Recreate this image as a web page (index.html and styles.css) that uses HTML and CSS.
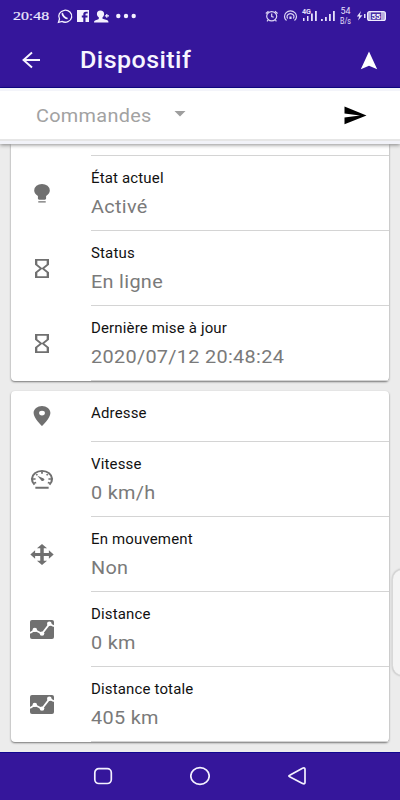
FILE: index.html
```html
<!DOCTYPE html>
<html lang="fr">
<head>
<meta charset="utf-8">
<title>Dispositif</title>
<link rel="stylesheet" href="styles.css">
</head>
<body>
<svg class="defs" width="0" height="0">
  <symbol id="hourglass" viewBox="0 0 24 24" preserveAspectRatio="none"><path d="M6 2v6h.01L6 8.010 10 12l-4 4 .01.010H6V22h12v-5.990h-.01L18 16l-4-4 4-3.990-.01-.010H18V2H6zm10 14.500V20H8v-3.500l4-4 4 4zm-4-5l-4-4V4h8v3.500l-4 4z"/></symbol>
  <symbol id="bulb" viewBox="0 0 24 24" preserveAspectRatio="none"><path d="M8.800 20h6.400v1.300H8.800zM12 2a6.700 6.900 0 0 0-6.700 6.900c0 2.300 1.200 4.300 3.200 5.700v2.600c0 .8.400 1.200 1.100 1.200h4.800c.7 0 1.100-.4 1.100-1.200v-2.600c2-1.400 3.200-3.400 3.200-5.700A6.700 6.900 0 0 0 12 2z"/></symbol>
  <symbol id="place" viewBox="0 0 24 24" preserveAspectRatio="none"><path d="M12 1C8.130 1 4.800 4.130 4.800 8.300c0 5.400 7.200 13.700 7.200 13.700s7.200-8.300 7.200-13.700C19.200 4.130 15.870 1 12 1zm0 9.900a2.500 2.500 0 0 1 0-5 2.500 2.500 0 0 1 0 5z"/></symbol>
  <symbol id="gauge" viewBox="0 0 24 24" preserveAspectRatio="none"><path d="M5.600 17.300A8.600 8.600 0 1 1 18.400 17.300" fill="none" stroke="currentColor" stroke-width="1.800"/><path d="M4.300 11.500h2.200M17.500 11.500h2.200M12 3.500V6M7 6.500l1.100 1M17 6.500l-1.100 1M5.400 15.700l1.600-.6M18.600 15.700l-1.600-.6" stroke="currentColor" stroke-width="1.500"/><path d="M8 8.200l5 2.400a1.500 1.500 0 1 1-1.900 1.800zM6.300 19.600h11.400v2H6.300z"/></symbol>
  <symbol id="move" viewBox="0 0 24 24" preserveAspectRatio="none"><path d="M12 1l4.300 4.600h-2.800v4.900h4.400V7.600L22 12l-4.100 4.400v-2.900h-4.400v4.900h2.800L12 23l-4.300-4.600h2.800v-4.900H6.100v2.900L2 12l4.100-4.400v2.900h4.400V5.600H7.700z"/></symbol>
  <symbol id="chart" viewBox="0 0 24 20" preserveAspectRatio="none"><rect width="24" height="20" rx="2"/><path d="M0 13.800l4.800-3.200 7.200 3.800 7.500-10.200 4.500 2.300" fill="none" stroke="#fff" stroke-width="1.900"/><g fill="#fff"><circle cx="4.800" cy="10.400" r="2.300"/><circle cx="12" cy="14.300" r="2.300"/><circle cx="19.300" cy="4" r="2.300"/></g></symbol>
</svg>
<div class="screen">
  <header>
    <div class="status">
      <span class="clock">20:48</span>
      <svg class="left-icons" width="80" height="16" viewBox="0 0 80 16">
        <g fill="none" stroke="#f4f1ff">
          <path d="M1.500 14.300l1-3.300A6.500 6 0 1 1 5 13.400z" stroke-width="1.300"/>
          <path d="M5.800 5.200c-1.300 1.500 2.800 5.800 4.700 5" stroke-width="1.800"/>
        </g>
        <path fill="#f4f1ff" d="M20 2h12v12h-3.500V9.500h2V7.600h-2V6.500c0-.8.300-1 1-1h1.200V3.700h-1.800c-1.900 0-2.600 1-2.600 2.500v1.400h-1.500v1.900h1.500V14H20z"/>
        <path fill="#f4f1ff" d="M43.300 2.500c2.500 0 3.800 1.500 3.800 3.400 0 1.600-.7 2.700-1.600 3.400v1.400l4.200 1.400c1 .4 1.800.9 1.800 2.300H37c0-1.400.7-1.900 1.700-2.200l2.700-1 .4-.5V9.300c-1-.7-1.900-1.800-1.900-3.400 0-1.900 1.200-3.400 3.400-3.400zM49.200 6h1.200v1.300H52v1.200h-1.600v1.300h-1.200V8.500h-1.300V7.300h1.300z"/>
        <g fill="#f4f1ff"><circle cx="61.300" cy="8" r="2.200"/><circle cx="69" cy="8" r="2.200"/><circle cx="76.700" cy="8" r="2.200"/></g>
      </svg>
      <span class="spacer"></span>
      <svg class="right-icons" width="122" height="20" viewBox="0 0 122 20">
        <g fill="none" stroke="#dcd6f4" stroke-width="1.200">
          <ellipse cx="6.700" cy="10.300" rx="5" ry="4.600"/><path d="M6.700 7.500v3l2 .8M.8 7.500l2.700-2.300M12.600 7.500L9.900 5.200M3 14l-1 1.400M10.400 14l1 1.400"/>
          <path d="M21.500 14.500A6 5.500 0 1 1 29.500 14.500M22.700 12.500A3.500 3 0 1 1 28.300 12.500"/>
          <path d="M25.500 10.500v2.500" stroke-width="2.200"/>
        </g>
        <path fill="#e6e1fa" d="M38 12h1.500v3H38zM42 10h1.500v5H42zM46 7.500h1.800V15H46zM50 5h1.800v10H50zM56 13h1.800v2H56zM60 11h1.800v4H60zM64 8h1.800v7H64zM68 5h1.800v10H68zM96 5l-4.200 5.500h2.400L93 14.500l4.500-5.300h-2.700z"/>
        <text x="37" y="8" class="tiny bold" textLength="9" lengthAdjust="spacingAndGlyphs">4G</text>
        <text x="75.500" y="7.800" class="tiny" textLength="10" lengthAdjust="spacingAndGlyphs">54</text>
        <text x="75" y="18" class="tiny" textLength="11" lengthAdjust="spacingAndGlyphs">B/s</text>
        <path fill="#e6e1fa" d="M99 8h1.500v4H99z"/>
        <rect x="102.600" y="5.700" width="17.800" height="8.800" rx="2" fill="#b9addf" stroke="#f0edff" stroke-width="1.200"/>
        <rect x="106" y="6.500" width="10" height="7.200" fill="#4a2fa6"/>
        <text x="106.500" y="13" class="tiny battery" textLength="9" lengthAdjust="spacingAndGlyphs">55</text>
      </svg>
    </div>
    <div class="appbar">
      <svg class="back" width="20" height="18" viewBox="0 0 20 18"><path d="M18 9H1.500M10 1.500L1.500 9l8.500 7.500" fill="none" stroke="#f7f5ff" stroke-width="1.900"/></svg>
      <h1 class="title">Dispositif</h1>
      <svg class="nav-arrow" width="18" height="19" viewBox="0 0 18 19"><path fill="#fff" d="M9 .5L17.200 18.200 9 14.800.8 18.200z"/></svg>
    </div>
  </header>
  <div class="commands">
    <span class="placeholder">Commandes</span>
    <svg class="caret" width="12" height="6" viewBox="0 0 12 6"><path fill="#9e9e9e" d="M.5 0h11L6 5.500z"/></svg>
    <svg class="send" width="23" height="19" viewBox="0 0 23 19"><path d="M.5.500L22.500 9.500.5 18.300v-6.900l15.500-1.900L.5 7.500z"/></svg>
  </div>
  <main>
    <section class="card card-top">
      <div class="row stub"></div>
      <div class="row"><svg class="icon"><use href="#bulb"/></svg><div class="cell"><span class="label">État actuel</span><span class="value">Activé</span></div></div>
      <div class="row"><svg class="icon"><use href="#hourglass"/></svg><div class="cell"><span class="label">Status</span><span class="value">En ligne</span></div></div>
      <div class="row"><svg class="icon"><use href="#hourglass"/></svg><div class="cell"><span class="label">Dernière mise à jour</span><span class="value">2020/07/12 20:48:24</span></div></div>
    </section>
    <section class="card">
      <div class="row short"><svg class="icon"><use href="#place"/></svg><div class="cell"><span class="label">Adresse</span></div></div>
      <div class="row"><svg class="icon"><use href="#gauge"/></svg><div class="cell"><span class="label">Vitesse</span><span class="value">0 km/h</span></div></div>
      <div class="row"><svg class="icon"><use href="#move"/></svg><div class="cell"><span class="label">En mouvement</span><span class="value">Non</span></div></div>
      <div class="row"><svg class="icon chart"><use href="#chart"/></svg><div class="cell"><span class="label">Distance</span><span class="value">0 km</span></div></div>
      <div class="row"><svg class="icon chart"><use href="#chart"/></svg><div class="cell"><span class="label">Distance totale</span><span class="value">405 km</span></div></div>
    </section>
    <div class="edge-handle"></div>
  </main>
  <nav>
    <svg width="20" height="20" viewBox="0 0 20 20"><rect x="1.800" y="2.700" width="16.500" height="14.800" rx="4"/></svg>
    <svg width="20" height="20" viewBox="0 0 20 20"><ellipse cx="10" cy="10" rx="9.200" ry="8.300"/></svg>
    <svg width="20" height="20" viewBox="0 0 20 20"><path d="M2.700 9.200L15.500 2.300Q18 1.200 18 3.500V16.500Q18 18.500 15.500 17.400L2.700 10.800Q1 10 2.700 9.200z"/></svg>
  </nav>
</div>
</body>
</html>
```
FILE: styles.css
```css
* { box-sizing: border-box; }
body { margin: 0; font-family: Roboto, "Liberation Sans", sans-serif; }
.defs { display: block; }
.screen { display: flex; flex-direction: column; width: 400px; height: 800px; overflow: hidden; background: #ececec; }
header { height: 88px; flex: none; background: #35169b; border-bottom: 1px solid #100790; }
.status { height: 32px; display: flex; align-items: center; padding: 0 13px; }
.clock { width: 44px; font: 13px/16px "Liberation Serif", serif; color: #eeebff; -webkit-text-stroke: .2px #eeebff; transform: scaleX(1.22); transform-origin: left; }
.left-icons { flex: none; }
.spacer { flex: 1; }
.right-icons { flex: none; }
.tiny { font: 9px Roboto, sans-serif; fill: #e6e1fa; }
.bold { font-weight: 700; font-size: 7px; }
.battery { font-weight: 700; font-size: 8px; fill: #fff; }
.appbar { height: 56px; display: flex; align-items: center; padding: 0 22px; }
.title { margin: 2px 0 0 38px; flex: 1; font-size: 23px; line-height: 28px; font-weight: 500; letter-spacing: .4px; color: #f7f5ff; transform: scaleX(1.09); transform-origin: left; }
.commands { flex: none; height: 56px; position: relative; z-index: 1; display: flex; align-items: center; padding-left: 36px; background: #fff; border-top: 3px solid #f3f4fa; border-bottom: 3px solid #f1f2f8; box-shadow: inset 0 -2px #e6e6e6, 0 1px 4px rgba(0,0,0,.45); }
.placeholder { width: 138px; font-size: 19px; line-height: 24px; letter-spacing: .3px; color: #a2a2a2; transform: scaleX(1.045); transform-origin: left; }
.caret { margin-top: -4px; }
.send { margin: -2px 0 0 158px; }
main { flex: 1; min-height: 0; position: relative; overflow: hidden; padding: 0 11px; }
.card { background: #fff; border-radius: 4px; box-shadow: 0 1px 2px rgba(0,0,0,.5); margin-bottom: 10px; }
.card-top { border-radius: 0 0 4px 4px; }
.row { height: 75px; display: flex; align-items: center; padding-left: 17px; }
.row.stub { height: 12px; padding: 0 0 1px 80px; }
.row.stub::after { content: ""; flex: 1; height: 100%; border-bottom: 1px solid #d4d4d4; }
.row.short { height: 51px; }
.icon { width: 28px; height: 23px; flex: none; fill: #707070; color: #707070; }
.icon.chart { width: 24px; height: 19px; margin: 0 2px; }
.cell { margin-left: 35px; flex: 1; height: 100%; padding-top: 13px; border-bottom: 1px solid #d4d4d4; white-space: nowrap; }
.label, .value { display: block; transform-origin: left; }
.label { font-size: 14px; line-height: 18px; letter-spacing: .15px; color: #111; transform: scaleX(1.07); }
.value { margin-top: 8px; font-size: 19px; line-height: 24px; letter-spacing: .3px; color: #7a7a7a; transform: scaleX(1.045); }
.edge-handle { position: absolute; right: -13px; top: 425px; width: 21px; height: 107px; background: #f4f4f4; border: 1px solid #d8d8d8; border-radius: 12px; box-shadow: 0 0 2px rgba(0,0,0,.25); }
nav { flex: none; height: 48px; background: #35169b; border-top: 1px solid #100790; padding-bottom: 2px; display: flex; align-items: center; justify-content: center; gap: 77px; }
nav svg { fill: none; stroke: #f4f1ff; stroke-width: 1.7; }
```
